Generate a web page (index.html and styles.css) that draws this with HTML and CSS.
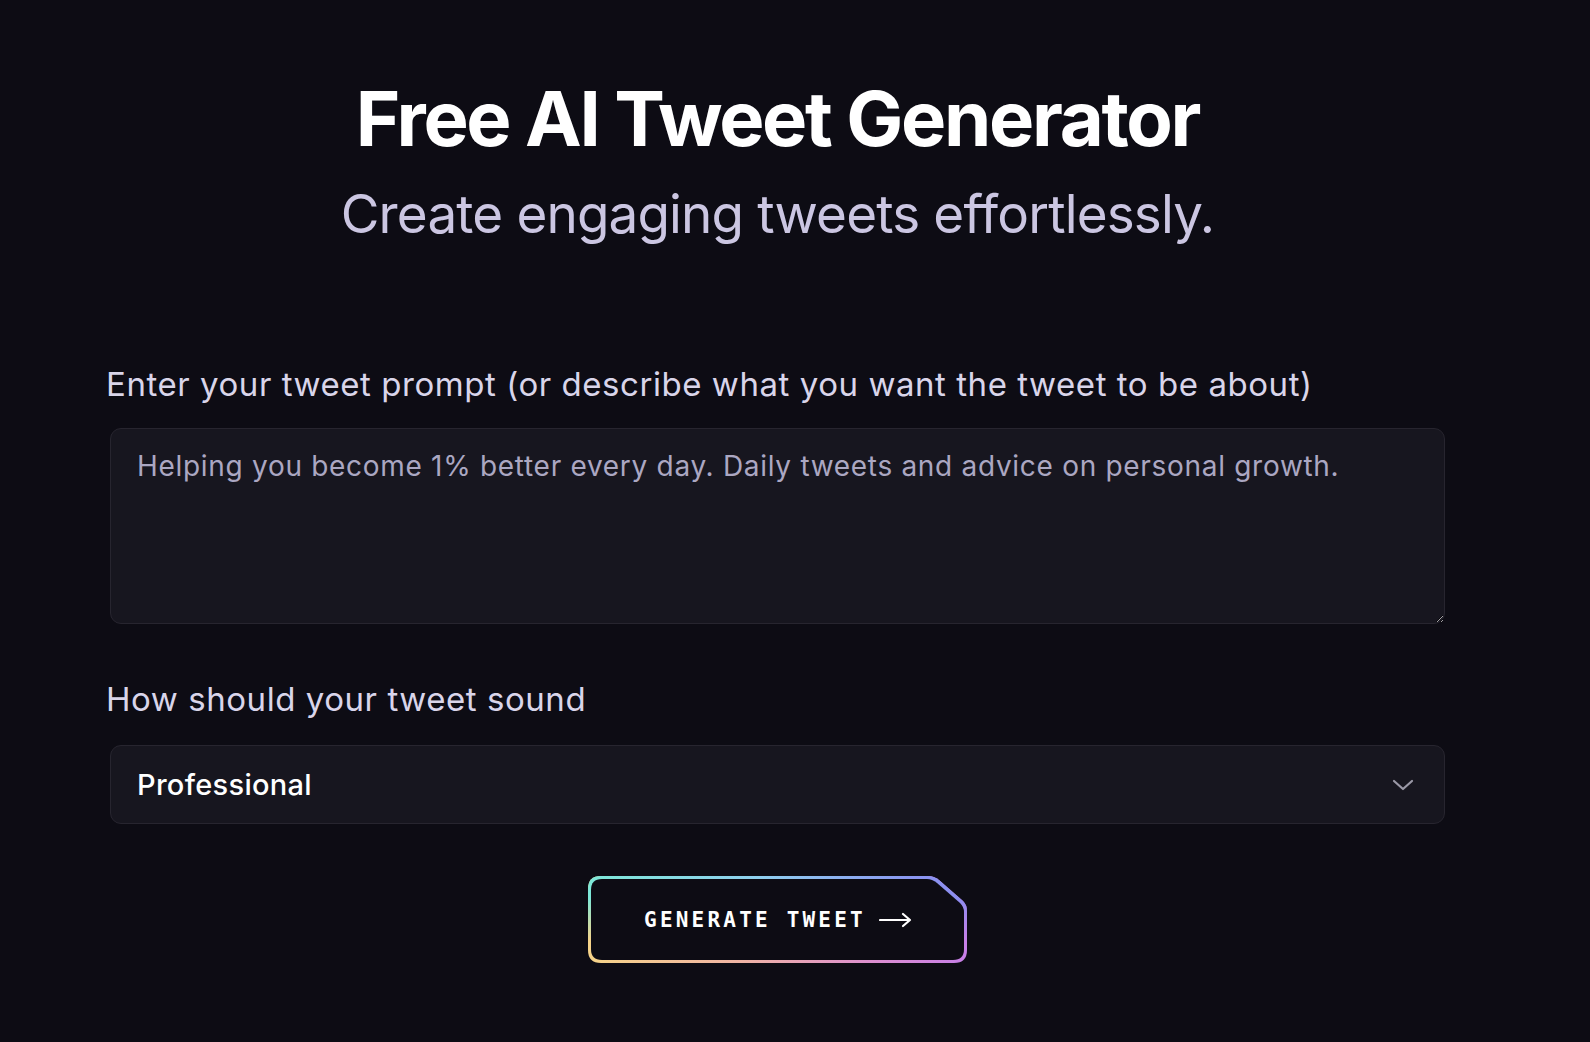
FILE: index.html
```html
<!DOCTYPE html>
<html lang="en">
<head>
<meta charset="utf-8">
<title>Free AI Tweet Generator</title>
<link rel="stylesheet" href="styles.css">
</head>
<body>
<main class="page">
  <header class="hero">
    <h1 class="title">Free AI Tweet Generator</h1>
    <p class="subtitle">Create engaging tweets effortlessly.</p>
  </header>
  <form class="form">
    <label class="label" for="prompt">Enter your tweet prompt (or describe what you want the tweet to be about)</label>
    <textarea id="prompt" class="textarea" placeholder="Helping you become 1% better every day. Daily tweets and advice on personal growth."></textarea>
    <label class="label label-tone" for="tone">How should your tweet sound</label>
    <div class="select">
      <span class="select-value">Professional</span>
      <svg class="chevron" width="22" height="14" viewBox="0 0 22 14"><path d="M2 3 L11 11 L20 3" fill="none" stroke="#9a98a6" stroke-width="2.2" stroke-linecap="round" stroke-linejoin="round"/></svg>
    </div>
    <div class="actions">
      <button type="button" class="btn">
        <span class="btn-fill"></span>
        <span class="btn-label">GENERATE TWEET</span>
        <svg class="btn-arrow" width="34" height="16" viewBox="0 0 34 16"><path d="M1 8 H31 M24 2 L31 8 L24 14" fill="none" stroke="#ffffff" stroke-width="2.2" stroke-linecap="round" stroke-linejoin="round"/></svg>
      </button>
    </div>
  </form>
</main>
</body>
</html>
```

FILE: styles.css
```css
* { box-sizing: border-box; }
html, body { margin: 0; padding: 0; }
body {
  background: #0d0c14;
  font-family: Inter, "Noto Sans", sans-serif;
  color: #ffffff;
  width: 1590px;
  height: 1042px;
  overflow: hidden;
}
.page {
  width: 1343px;
  margin-left: 106px;
  padding-top: 72px;
}
.hero {
  display: flex;
  flex-direction: column;
  align-items: center;
}
.title {
  margin: 0;
  font-size: 76px;
  line-height: 92px;
  font-weight: 700;
  letter-spacing: -2.3px;
  color: #ffffff;
}
.subtitle {
  margin: 0;
  margin-top: 17px;
  font-size: 53px;
  line-height: 66px;
  font-weight: 400;
  letter-spacing: -0.85px;
  color: #cbc6e2;
}
.form {
  display: flex;
  flex-direction: column;
  margin-top: 117px;
}
.label {
  font-size: 33px;
  line-height: 40px;
  color: #d9d5ea;
  letter-spacing: 0.55px;
}
.textarea {
  margin: 24px 4px 0;
  height: 196px;
  background: #17161f;
  border: 1.5px solid #27252f;
  border-radius: 11px;
  padding: 18px 26px;
  font-family: Inter, "Noto Sans", sans-serif;
  font-size: 28px;
  line-height: 38px;
  letter-spacing: 0.7px;
  color: #ffffff;
  resize: vertical;
  outline: none;
}
.textarea::placeholder {
  color: #aba7c2;
}
.label-tone {
  margin-top: 55px;
}
.select {
  margin: 26px 4px 0;
  height: 79px;
  background: #17161f;
  border: 1.5px solid #27252f;
  border-radius: 11px;
  padding: 0 30px 0 26px;
  display: flex;
  align-items: center;
  justify-content: space-between;
}
.select-value {
  font-size: 29px;
  font-weight: 500;
  color: #ffffff;
  letter-spacing: 0.3px;
}
.actions {
  display: flex;
  justify-content: center;
  margin-top: 52px;
}
.btn {
  position: relative;
  width: 379px;
  height: 87px;
  border: none;
  padding: 0 0 0 2px;
  background: linear-gradient(to right, #f6d489 0%, #f0b4a4 40%, #dc8fd0 75%, #c77fe8 100%);
  clip-path: path("M13,0 H340 Q346,0 351,4 L375,25 Q379,29 379,35 V74 Q379,87 366,87 H13 Q0,87 0,74 V13 Q0,0 13,0 Z");
  display: flex;
  align-items: center;
  justify-content: center;
  gap: 13px;
  cursor: pointer;
}
.btn::before {
  content: "";
  position: absolute;
  inset: 0;
  background: linear-gradient(to right, #7de8d8 0%, #8fd0ef 45%, #8a97f1 85%, #8c8cf0 100%);
  -webkit-mask-image: linear-gradient(to bottom, #000 25%, transparent 75%);
  mask-image: linear-gradient(to bottom, #000 25%, transparent 75%);
}
.btn-fill {
  position: absolute;
  inset: 0;
  background: #0d0c14;
  clip-path: path("M14,3 H339 Q344,3 349,7 L372,27 Q376,31 376,36 V73 Q376,84 365,84 H14 Q3,84 3,73 V14 Q3,3 14,3 Z");
}
.btn-label {
  position: relative;
  font-family: "DejaVu Sans Mono", "Liberation Mono", monospace;
  font-weight: 700;
  font-size: 21px;
  letter-spacing: 3.2px;
  color: #ffffff;
}
.btn-arrow {
  position: relative;
}
```
